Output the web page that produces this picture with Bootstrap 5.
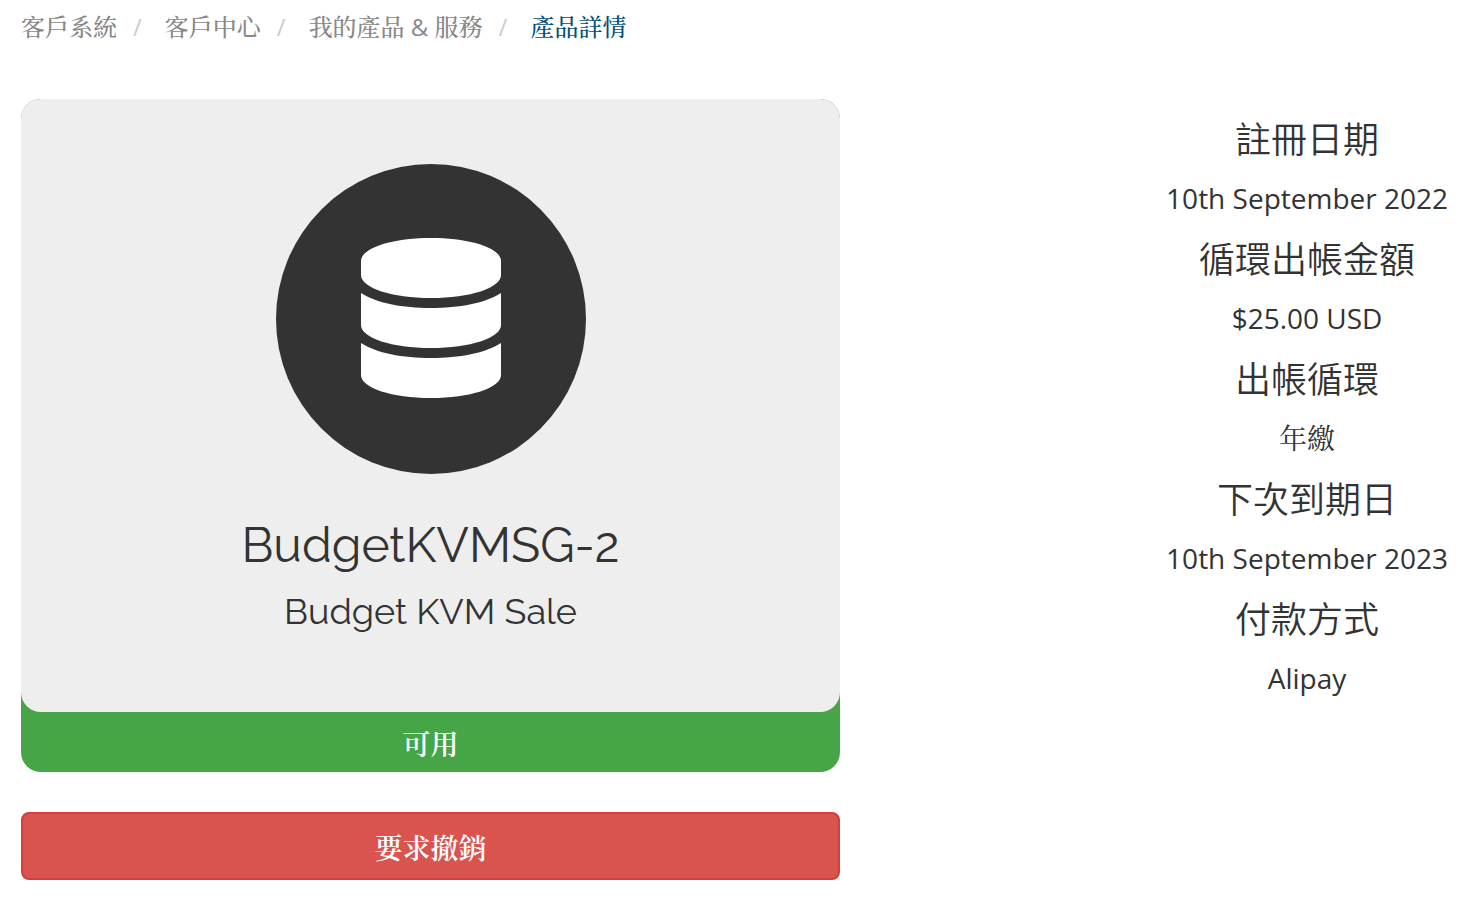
<!DOCTYPE html>
<html lang="zh-Hant">
<head>
<meta charset="utf-8">
<meta name="viewport" content="width=device-width, initial-scale=1">
<title>產品詳情</title>
<link href="https://cdn.jsdelivr.net/npm/bootstrap@5.3.0/dist/css/bootstrap.min.css" rel="stylesheet">
<style>
body{font-family:"Open Sans","Noto Serif CJK TC","Noto Sans CJK TC",sans-serif;font-size:28px;line-height:40px;color:#333}
.page{--bs-gutter-x:42px;padding-top:7px;padding-bottom:22px}
.breadcrumb{font-size:24px;font-weight:500;--bs-breadcrumb-divider-color:#ccc;--bs-breadcrumb-item-active-color:#00507a;--bs-breadcrumb-item-padding-x:16px;margin-bottom:52px}
.breadcrumb-item+.breadcrumb-item::before{padding-right:23px;font-weight:400}
.breadcrumb a{color:#888}
.product-row{--bs-gutter-x:42px}
.product-status{background:#46a546;border-radius:20px;color:#fff;font-weight:600}
.status-text{padding-top:4px;line-height:56px}
.product-icon{background:#eee;border-radius:20px;padding:65px 20px 81px;color:#333}
.product-icon svg{width:310px;height:310px}
.product-icon h1,.product-icon h2{font-family:Raleway,Lato,sans-serif;font-weight:400}
.product-icon h1{font-size:48px;line-height:54px;margin:44px 0 19px}
.product-icon h2{font-size:36px;line-height:40px}
.btn-cancel{--bs-btn-color:#fff;--bs-btn-bg:#d9534f;--bs-btn-border-color:#d43f3a;--bs-btn-hover-color:#fff;--bs-btn-hover-bg:#c9302c;--bs-btn-hover-border-color:#ac2925;border-width:2px;border-radius:8px;font-size:28px;font-weight:600;line-height:40px;padding:14px 24px 10px;margin-top:40px}
.facts{padding:18px 28px 0}
.facts dt{font-family:"Noto Sans CJK TC",sans-serif;font-size:36px;line-height:40px;font-weight:350;margin-bottom:21px}
.facts dd{line-height:40px;margin-bottom:19px}
</style>
</head>
<body class="bg-white">
<main class="page container-fluid">
<nav aria-label="breadcrumb"><ol class="breadcrumb">
<li class="breadcrumb-item"><a class="text-decoration-none" href="#">客戶系統</a></li>
<li class="breadcrumb-item"><a class="text-decoration-none" href="#">客戶中心</a></li>
<li class="breadcrumb-item"><a class="text-decoration-none" href="#">我的產品 &amp; 服務</a></li>
<li class="breadcrumb-item active" aria-current="page">產品詳情</li>
</ol></nav>
<div class="row product-row text-center">
<div class="col-7">
<div class="product-status">
<div class="product-icon">
<svg class="d-block mx-auto" viewBox="0 0 310 310" aria-hidden="true">
<circle cx="155" cy="155" r="155" fill="#333"/>
<g fill="#fff">
<path d="M85 97C85 84 116 74 155 74S225 84 225 97V111C225 124 194 134 155 134S85 124 85 111Z"/>
<path d="M85 129C100 139 127 144 155 144S210 139 225 129V161C225 174 194 184 155 184S85 174 85 161Z"/>
<path d="M85 179C100 189 127 194 155 194S210 189 225 179V211C225 224 194 234 155 234S85 224 85 211Z"/>
</g>
</svg>
<h1>BudgetKVMSG-2</h1>
<h2 class="mb-0">Budget KVM Sale</h2>
</div>
<div class="status-text">可用</div>
</div>
<button type="button" class="btn btn-cancel w-100">要求撤銷</button>
</div>
<dl class="facts col-auto ms-auto mb-0">
<dt>註冊日期</dt><dd>10th September 2022</dd>
<dt>循環出帳金額</dt><dd>$25.00 USD</dd>
<dt>出帳循環</dt><dd>年繳</dd>
<dt>下次到期日</dt><dd>10th September 2023</dd>
<dt>付款方式</dt><dd class="mb-0">Alipay</dd>
</dl>
</div>
</main>
<script src="https://cdn.jsdelivr.net/npm/bootstrap@5.3.0/dist/js/bootstrap.bundle.min.js"></script>
</body>
</html>
